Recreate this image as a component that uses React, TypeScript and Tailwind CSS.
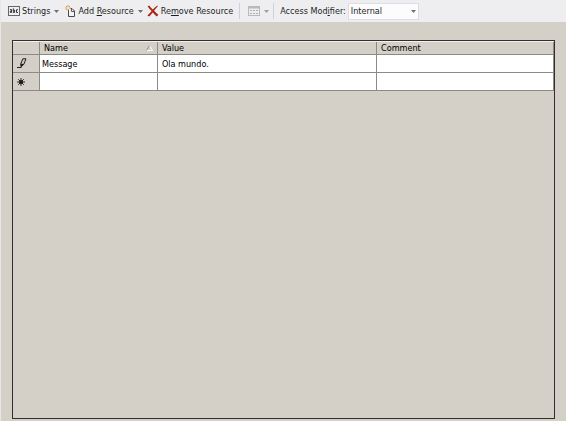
import React, { useState } from "react";

interface ResourceRow {
  name: string;
  value: string;
  comment: string;
}

const ROWS: ResourceRow[] = [{ name: "Message", value: "Ola mundo.", comment: "" }];

const MODIFIERS = ["Internal", "Public", "No code generation"];

const StringsIcon = () => (
  <svg width="12" height="10" viewBox="0 0 12 10" aria-hidden="true">
    <rect x="0.5" y="0.5" width="11" height="9" fill="#f0f0f1" stroke="#666" />
    <g fill="none" stroke="#3a3a3a" strokeWidth="1">
      <path d="M2 3.5h1.5v3H2.3V5h1.2" />
      <path d="M5.3 2.4v4.1h1.3V4H5.3" />
      <path d="M10 3.7H8.5v2.8H10" />
    </g>
  </svg>
);

const AddIcon = () => (
  <svg width="11" height="12" viewBox="0 0 11 12" aria-hidden="true">
    <path d="M3.5 4.5V11.5H9.5V6L7 3.5H5.5" fill="#f4f4f5" stroke="#4a4a4a" />
    <path d="M6.5 3.5v3h3" fill="none" stroke="#4a4a4a" strokeWidth="0.9" />
    <path d="M3 0v2M3 4v1.4M0 3h2M4 3h1.6M1 1l1.1 1.1M5 1L3.9 2.1M1 5l1.1-1.1" stroke="#d6a04c" strokeWidth="1" />
  </svg>
);

const RemoveIcon = () => (
  <svg width="12" height="12" viewBox="0 0 12 12" aria-hidden="true">
    <path d="M0.6 1.6L2.2 0.5Q4 3 5.9 4.6Q8 2 10.4 0.6L10.8 1.2Q8.6 3.4 7.1 5.8Q9 8 11.4 9.8L9.8 11.4Q7.4 9.4 5.8 7.4Q4 9.6 2.2 11.4L0.4 10.6Q2.6 8.6 4.6 6Q2.4 4 0.6 1.6z" fill="#ad2412" />
  </svg>
);

const GridIcon = () => (
  <svg width="12" height="10" viewBox="0 0 12 10" aria-hidden="true">
    <rect x="0.5" y="0.5" width="11" height="9" fill="#ededee" stroke="#b9b9bb" />
    <path d="M0 1.5h12" stroke="#b9b9bb" strokeWidth="2" />
    <path d="M2 4.5h2M5 4.5h2M8 4.5h2M2 7.5h2M5 7.5h2M8 7.5h2" stroke="#b0b0b3" />
  </svg>
);

const Arrow = ({ className = "" }: { className?: string }) => (
  <svg width="5" height="3" viewBox="0 0 5 3" className={className} aria-hidden="true">
    <path d="M0 0h5L2.5 3z" fill="currentColor" />
  </svg>
);

const PencilIcon = () => (
  <svg width="10" height="11" viewBox="0 0 10 11" aria-hidden="true">
    <path d="M5.8 0.8H9L6.8 6.4L4 8.6L3.8 5.8z" fill="#c9c5bd" stroke="#222" strokeWidth="1" />
    <path d="M3.8 5.6L6.9 6.2L3.8 9.2z" fill="#222" />
    <path d="M0 9.5h4.5" stroke="#222" />
  </svg>
);

const NewRowIcon = () => (
  <svg width="8" height="8" viewBox="0 0 8 8" aria-hidden="true">
    <path d="M4 0v8M0 4h8M1.2 1.2l5.6 5.6M6.8 1.2L1.2 6.8" stroke="#1a1a1a" strokeWidth="0.9" />
    <circle cx="4" cy="4" r="2" fill="#1a1a1a" />
  </svg>
);

const SortIcon = () => (
  <svg width="7" height="6" viewBox="0 0 7 6" aria-hidden="true">
    <path d="M3.5 0.5L6.5 5.5H0.5" stroke="#fff" fill="none" />
    <path d="M0.5 5.5L3.5 0.5" stroke="#96938c" fill="none" />
  </svg>
);

const headClass = "border-r border-b border-[#8c8a85] pl-1 text-left font-normal";
const cellClass = "border-r border-b border-[#8c8a85] bg-white";
const inputClass = "block w-full bg-transparent outline-none";

export default function App() {
  const [modifier, setModifier] = useState(MODIFIERS[0]);
  const [rows, setRows] = useState<ResourceRow[]>([...ROWS, { name: "", value: "", comment: "" }]);

  const update = (index: number, key: keyof ResourceRow, text: string) => {
    setRows(rows.map((row, i) => (i === index ? { ...row, [key]: text } : row)));
  };

  return (
    <div className="flex min-h-screen flex-col border-l border-[#e6e6e8] bg-[#d4cfc7] font-['DejaVu_Sans_Condensed','DejaVu_Sans',sans-serif] text-[9px] leading-3 text-[#1e1e1e]">
      {/* Toolbar */}
      <div role="toolbar" className="flex h-[22px] items-center overflow-hidden bg-[#eeeef0] pl-[7px] whitespace-nowrap">
        <button type="button" className="flex items-center gap-0.5">
          <StringsIcon />
          Strings
          <Arrow className="ml-0.5 text-[#717171]" />
        </button>
        <button type="button" className="ml-1.5 flex items-center gap-0.5">
          <AddIcon />
          <span>
            Add <u>R</u>esource
          </span>
          <Arrow className="ml-0.5 text-[#717171]" />
        </button>
        <button type="button" className="ml-1 flex items-center gap-0.5">
          <RemoveIcon />
          <span>
            Re<u>m</u>ove Resource
          </span>
        </button>
        <div className="ml-1.5 h-4 w-px bg-[#cfd0de]" />
        <button type="button" disabled aria-label="View" className="ml-2 flex items-center gap-0.5">
          <GridIcon />
          <Arrow className="ml-0.5 text-[#a0a0a0]" />
        </button>
        <div className="ml-1 h-4 w-px bg-[#cfd0de]" />
        <label htmlFor="modifier" className="ml-1.5">
          Access Mod<u>i</u>fier:
        </label>
        <div className="relative ml-0.5">
          <select
            id="modifier"
            value={modifier}
            onChange={(e) => setModifier(e.target.value)}
            className="block h-[17px] w-[71px] appearance-none border border-[#dcdde6] bg-[#fcfcfc] pl-0.5 outline-none"
          >
            {MODIFIERS.map((m) => (
              <option key={m}>{m}</option>
            ))}
          </select>
          <Arrow className="pointer-events-none absolute top-[7px] right-[3px] text-[#717171]" />
        </div>
      </div>

      {/* Resource grid */}
      <div className="mx-[11px] mt-[18px] mb-0.5 flex-1 border border-[#2f2f2f]">
        <table className="w-full table-fixed border-separate border-spacing-0 border-t border-[#f4f2ee] text-black">
          <colgroup>
            <col className="w-[27px]" />
            <col className="w-[21.8%]" />
            <col className="w-[40.5%]" />
            <col />
          </colgroup>
          <thead>
            <tr className="h-[13px]">
              <th className={headClass} aria-label="Row state" />
              <th className={headClass}>
                <div className="flex items-center justify-between pr-1">
                  Name
                  <SortIcon />
                </div>
              </th>
              <th className={headClass}>Value</th>
              <th className={headClass}>Comment</th>
            </tr>
          </thead>
          <tbody>
            {rows.map((row, i) => (
              <tr key={i} className="h-[18px]">
                <td className="border-r border-b border-[#8c8a85] pl-1">
                  {i === rows.length - 1 ? <NewRowIcon /> : <PencilIcon />}
                </td>
                <td className={cellClass}>
                  <input aria-label="Name" className={`${inputClass} pl-0.5`} value={row.name} onChange={(e) => update(i, "name", e.target.value)} />
                </td>
                <td className={cellClass}>
                  <input aria-label="Value" className={`${inputClass} pl-1`} value={row.value} onChange={(e) => update(i, "value", e.target.value)} />
                </td>
                <td className={cellClass}>
                  <input aria-label="Comment" className={`${inputClass} pl-1`} value={row.comment} onChange={(e) => update(i, "comment", e.target.value)} />
                </td>
              </tr>
            ))}
          </tbody>
        </table>
      </div>
    </div>
  );
}
